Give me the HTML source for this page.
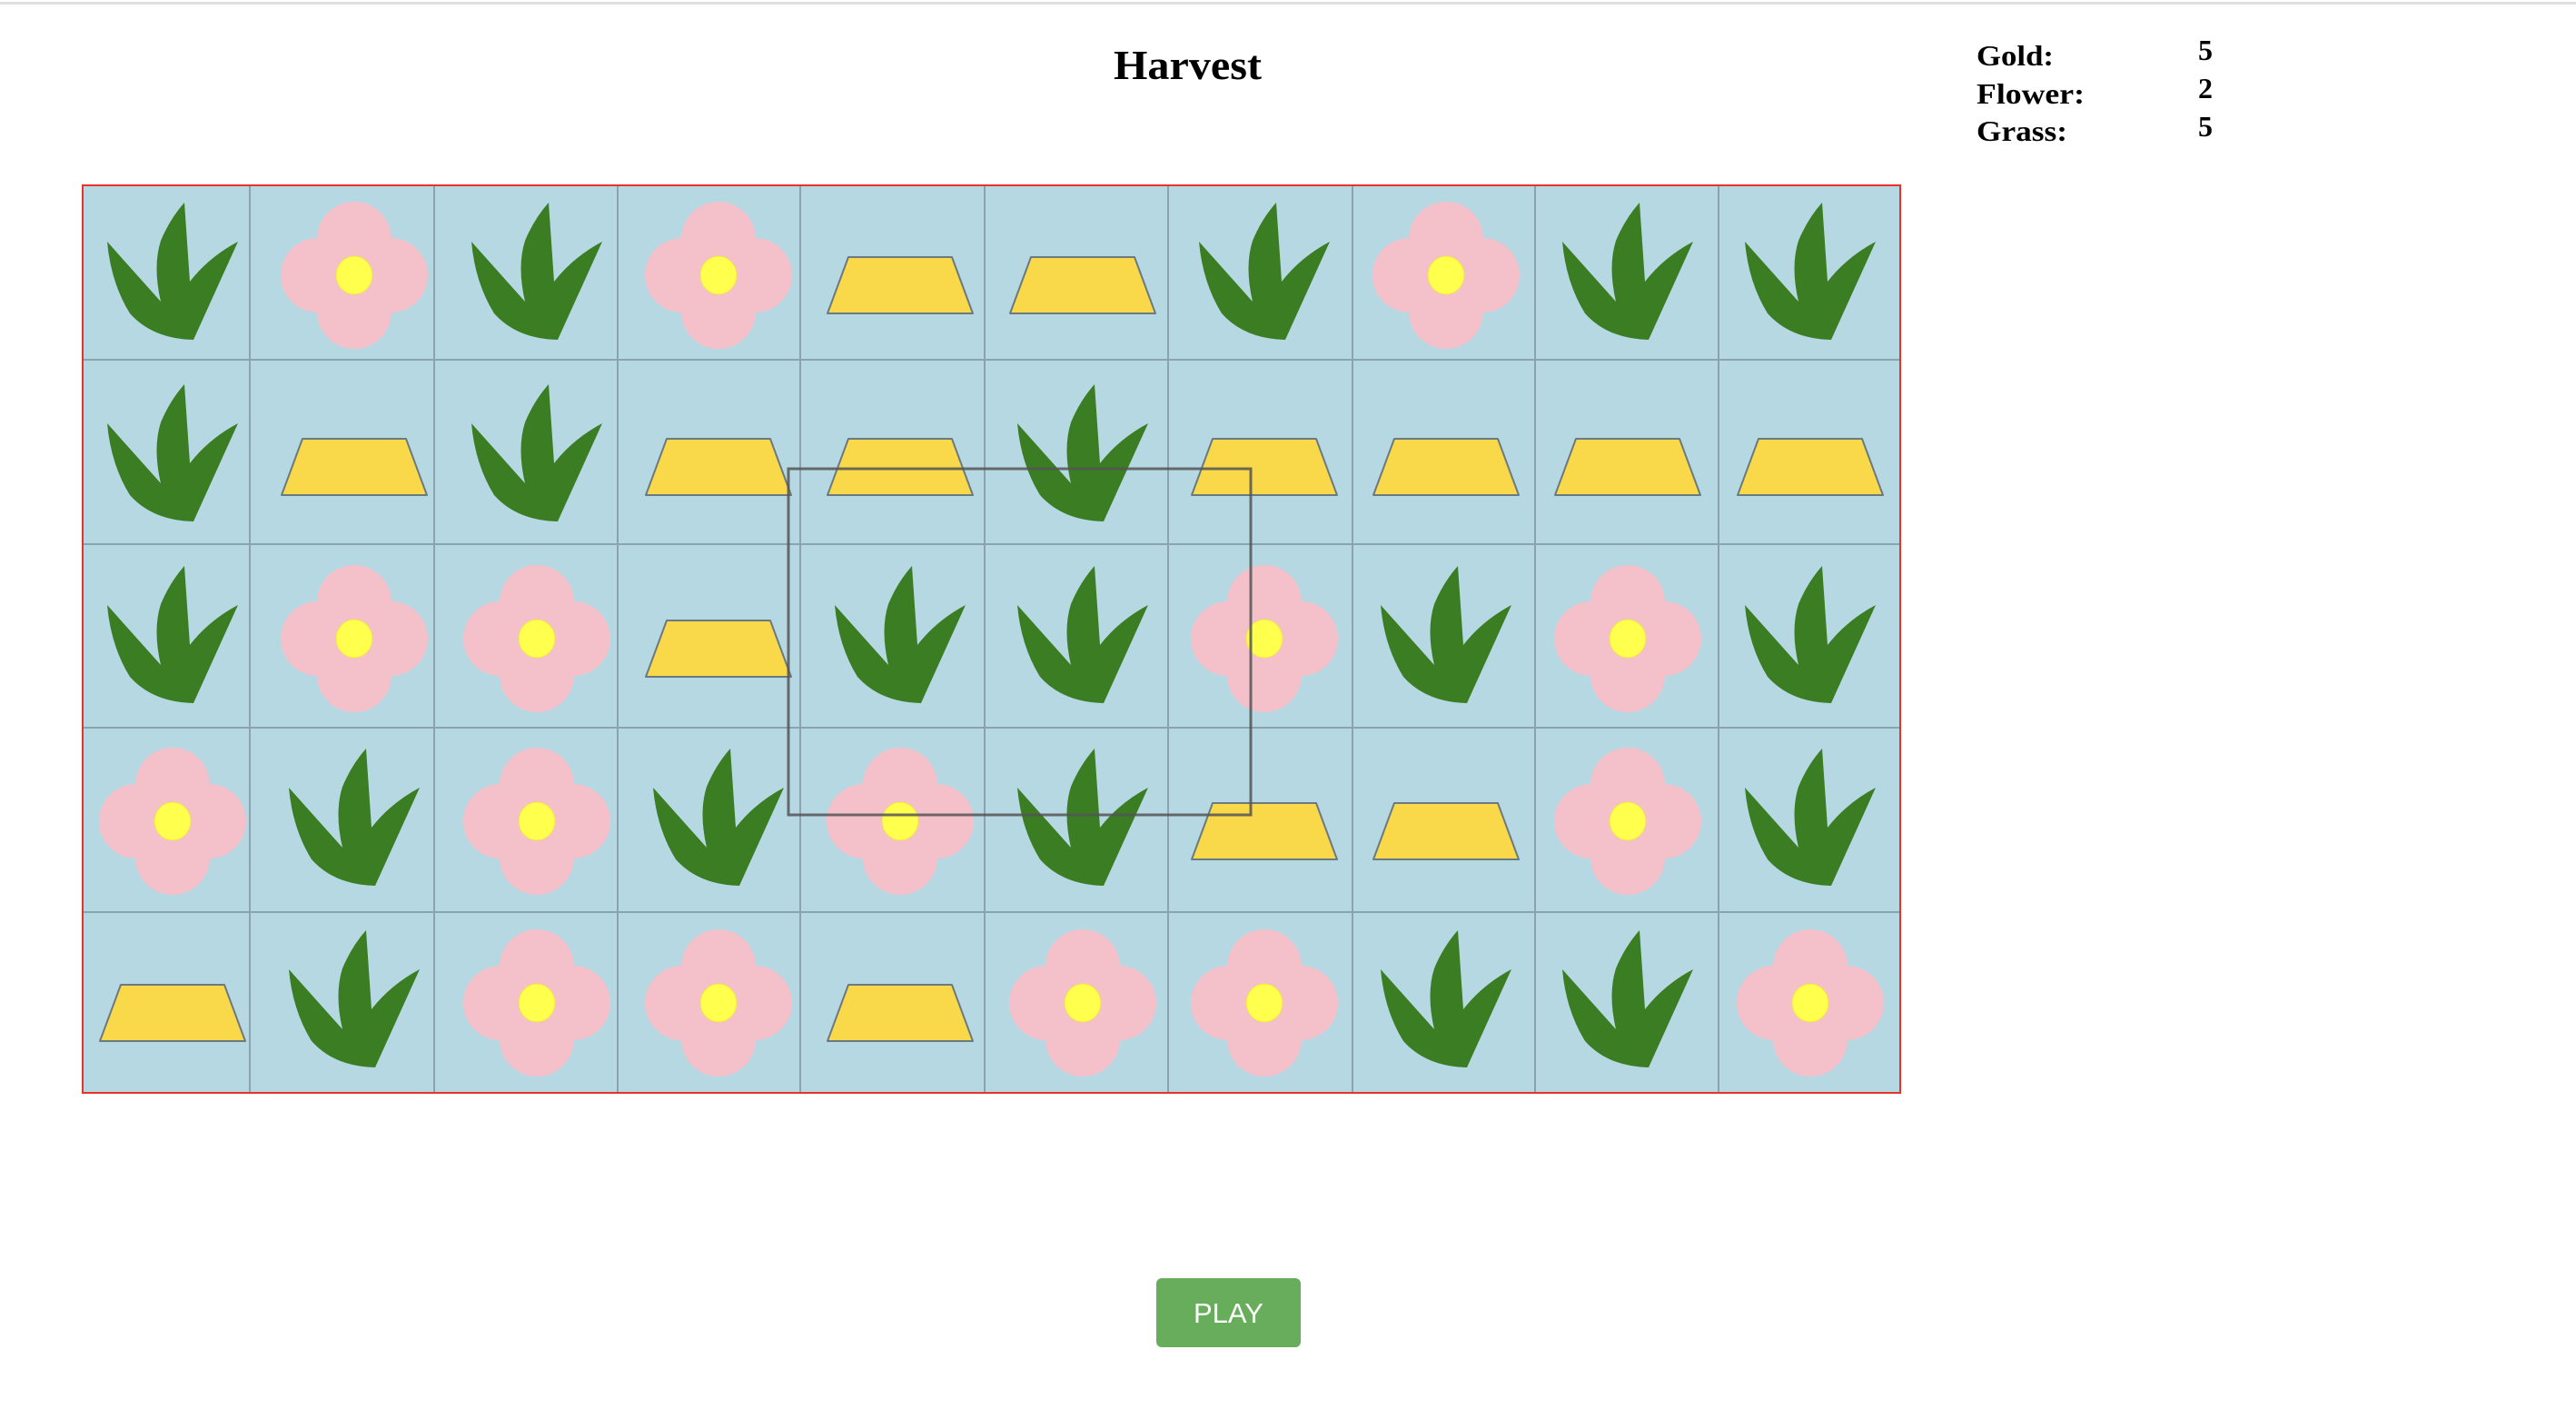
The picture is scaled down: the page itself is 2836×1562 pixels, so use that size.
<!DOCTYPE html>
<html><head><meta charset="utf-8"><style>
html,body{margin:0;padding:0;background:#fff;width:2836px;height:1562px;overflow:hidden}
svg{display:block}
</style></head><body>
<svg width="2836" height="1562" viewBox="0 0 2836 1562" xmlns="http://www.w3.org/2000/svg">
<defs>
<g id="G"><path d="M-72,-37 L-13,29 Q-22,-10 -13,-38 Q-3,-62 13,-80 L19,7 Q40,-20 72,-37 L23,71 Q-22,70 -47,42 Q-68,8 -72,-37 Z" fill="#3a7d22"/></g>
<g id="F" fill="#f4c1ca"><circle cx="0" cy="-40" r="41"/><circle cx="0" cy="40" r="41"/><circle cx="-40" cy="0" r="41"/><circle cx="40" cy="0" r="41"/><rect x="-40" y="-40" width="80" height="80"/><ellipse cx="0" cy="0" rx="20" ry="21" fill="#ffff4d" stroke="#f5e050" stroke-width="1"/></g>
<g id="A"><polygon points="-57,-20 57,-20 80,42 -80,42" fill="#f9d84a" stroke="#6b7a80" stroke-width="2" stroke-linejoin="round"/></g>
</defs>
<rect x="0" y="2" width="2836" height="3" fill="#e0e0e0"/>
<text x="1226" y="87" textLength="163" lengthAdjust="spacingAndGlyphs" font-family="Liberation Serif, serif" font-weight="bold" font-size="46" fill="#000">Harvest</text>
<g font-family="Liberation Serif, serif" font-weight="bold" font-size="32" fill="#000">
<text x="2176" y="72" textLength="85" lengthAdjust="spacingAndGlyphs">Gold:</text><text x="2176" y="114" textLength="119" lengthAdjust="spacingAndGlyphs">Flower:</text><text x="2176" y="155" textLength="100" lengthAdjust="spacingAndGlyphs">Grass:</text>
<text x="2420" y="66">5</text><text x="2420" y="108">2</text><text x="2420" y="150">5</text>
</g>
<rect x="90" y="203" width="2003" height="1001" fill="#b6d8e3"/>
<g stroke="#8aa4ad" stroke-width="2">
<line x1="275" y1="203" x2="275" y2="1204"/><line x1="478" y1="203" x2="478" y2="1204"/><line x1="680" y1="203" x2="680" y2="1204"/><line x1="881" y1="203" x2="881" y2="1204"/><line x1="1084" y1="203" x2="1084" y2="1204"/><line x1="1286" y1="203" x2="1286" y2="1204"/><line x1="1489" y1="203" x2="1489" y2="1204"/><line x1="1690" y1="203" x2="1690" y2="1204"/><line x1="1892" y1="203" x2="1892" y2="1204"/>
<line x1="90" y1="396" x2="2093" y2="396"/><line x1="90" y1="599" x2="2093" y2="599"/><line x1="90" y1="801" x2="2093" y2="801"/><line x1="90" y1="1004" x2="2093" y2="1004"/>
</g>
<use href="#G" transform="translate(190,303)"/><use href="#F" transform="translate(390,303)"/><use href="#G" transform="translate(591,303)"/><use href="#F" transform="translate(791,303)"/><use href="#A" transform="translate(991,303)"/><use href="#A" transform="translate(1192,303)"/><use href="#G" transform="translate(1392,303)"/><use href="#F" transform="translate(1592,303)"/><use href="#G" transform="translate(1792,303)"/><use href="#G" transform="translate(1993,303)"/>
<use href="#G" transform="translate(190,503)"/><use href="#A" transform="translate(390,503)"/><use href="#G" transform="translate(591,503)"/><use href="#A" transform="translate(791,503)"/><use href="#A" transform="translate(991,503)"/><use href="#G" transform="translate(1192,503)"/><use href="#A" transform="translate(1392,503)"/><use href="#A" transform="translate(1592,503)"/><use href="#A" transform="translate(1792,503)"/><use href="#A" transform="translate(1993,503)"/>
<use href="#G" transform="translate(190,703)"/><use href="#F" transform="translate(390,703)"/><use href="#F" transform="translate(591,703)"/><use href="#A" transform="translate(791,703)"/><use href="#G" transform="translate(991,703)"/><use href="#G" transform="translate(1192,703)"/><use href="#F" transform="translate(1392,703)"/><use href="#G" transform="translate(1592,703)"/><use href="#F" transform="translate(1792,703)"/><use href="#G" transform="translate(1993,703)"/>
<use href="#F" transform="translate(190,904)"/><use href="#G" transform="translate(390,904)"/><use href="#F" transform="translate(591,904)"/><use href="#G" transform="translate(791,904)"/><use href="#F" transform="translate(991,904)"/><use href="#G" transform="translate(1192,904)"/><use href="#A" transform="translate(1392,904)"/><use href="#A" transform="translate(1592,904)"/><use href="#F" transform="translate(1792,904)"/><use href="#G" transform="translate(1993,904)"/>
<use href="#A" transform="translate(190,1104)"/><use href="#G" transform="translate(390,1104)"/><use href="#F" transform="translate(591,1104)"/><use href="#F" transform="translate(791,1104)"/><use href="#A" transform="translate(991,1104)"/><use href="#F" transform="translate(1192,1104)"/><use href="#F" transform="translate(1392,1104)"/><use href="#G" transform="translate(1592,1104)"/><use href="#G" transform="translate(1792,1104)"/><use href="#F" transform="translate(1993,1104)"/>
<rect x="868" y="516" width="509" height="381" fill="none" stroke="#555" stroke-opacity="0.85" stroke-width="3"/>
<rect x="91" y="204" width="2001" height="999" fill="none" stroke="#e8322a" stroke-width="2"/>
<rect x="1273" y="1407" width="159" height="76" rx="6" fill="#67ad5b"/>
<text x="1352.5" y="1456" text-anchor="middle" font-family="Liberation Sans, sans-serif" font-size="31" fill="#fff">PLAY</text>
</svg>
</body></html>
